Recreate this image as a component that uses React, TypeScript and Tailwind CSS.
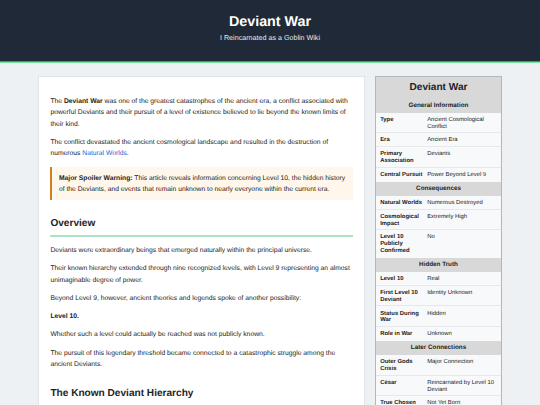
import type { ReactNode } from "react";

type Row = { label: string; value: string };
type Group = { title: string; rows: Row[] };

const GROUPS: Group[] = [
  {
    title: "General Information",
    rows: [
      { label: "Type", value: "Ancient Cosmological Conflict" },
      { label: "Era", value: "Ancient Era" },
      { label: "Primary Association", value: "Deviants" },
      { label: "Central Pursuit", value: "Power Beyond Level 9" },
    ],
  },
  {
    title: "Consequences",
    rows: [
      { label: "Natural Worlds", value: "Numerous Destroyed" },
      { label: "Cosmological Impact", value: "Extremely High" },
      { label: "Level 10 Publicly Confirmed", value: "No" },
    ],
  },
  {
    title: "Hidden Truth",
    rows: [
      { label: "Level 10", value: "Real" },
      { label: "First Level 10 Deviant", value: "Identity Unknown" },
      { label: "Status During War", value: "Hidden" },
      { label: "Role in War", value: "Unknown" },
    ],
  },
  {
    title: "Later Connections",
    rows: [
      { label: "Outer Gods Crisis", value: "Major Connection" },
      { label: "César", value: "Reincarnated by Level 10 Deviant" },
      { label: "True Chosen", value: "Not Yet Born" },
    ],
  },
];

function Heading({ children }: { children: ReactNode }) {
  return (
    <h2 className="mt-[15px] mb-[8.4px] border-b-2 border-[#afe2c4] pb-[2px] text-[10.1px] leading-[17.2px] font-bold text-[#1f2328]">
      {children}
    </h2>
  );
}

function P({ children }: { children: ReactNode }) {
  return <p className="my-[6.75px]">{children}</p>;
}

function Infobox() {
  return (
    <aside className="w-[127px] shrink-0 border border-[#b4b7ba] bg-[#f8f9fb] text-[5.9px] leading-[6.9px] text-[#222]">
      <div className="bg-[#d8d8d8] pt-[5.2px] pb-[5px] text-center text-[10.1px] leading-[11.5px] font-bold">
        Deviant War
      </div>
      {GROUPS.map((g) => (
        <section key={g.title}>
          <h3 className="bg-[#d8d8d8] pt-[4.3px] pb-[2.7px] text-center text-[6.3px] font-bold">{g.title}</h3>
          <dl className="divide-y divide-[#e6e8ea]">
            {g.rows.map((r) => (
              <div key={r.label} className="flex pt-[4.1px] pb-[1.9px] pl-[4.2px] last:pb-[2.7px]">
                <dt className="w-[47px] shrink-0 pr-[3px] font-bold">{r.label}</dt>
                <dd className="flex-1 pr-[4px]">{r.value}</dd>
              </div>
            ))}
          </dl>
        </section>
      ))}
    </aside>
  );
}

export default function App() {
  return (
    <div className="h-[405px] overflow-hidden bg-[#edf1f4] font-['Liberation_Sans',Arial,sans-serif] text-[6.75px] leading-[11.475px] text-[#222] [text-rendering:geometricPrecision]">
      <header className="h-[62px] border-b border-[#3f9a66] bg-[#1f2937] pt-[9.6px] text-center text-white shadow-[0_1px_0_#78e6a0]">
        <h1 className="text-[14.3px] leading-[24px] font-bold">Deviant War</h1>
        <p className="-mt-[0.6px] text-[7.15px] text-[#e8eaed]">I Reincarnated as a Goblin Wiki</p>
      </header>

      <div className="mx-auto mt-[14px] flex w-[464px] items-start justify-between">
        <main className="w-[327px] border border-[#e0e4e8] bg-white px-[11.4px] pt-[5px] pb-[12px]">
          <div className="pt-[7px]">
            <P>
              The <b>Deviant War</b> was one of the greatest catastrophes of the ancient era, a conflict associated with
              powerful Deviants and their pursuit of a level of existence believed to lie beyond the known limits of
              their kind.
            </P>
            <P>
              The conflict devastated the ancient cosmological landscape and resulted in the destruction of numerous{" "}
              <a href="#natural-worlds" className="text-[#2f5fd0]">Natural Worlds</a>.
            </P>
          </div>

          <div className="mt-[7.6px] border-l-2 border-[#d08020] bg-[#fff7eb] pt-[5.4px] pr-[6px] pb-[4.6px] pl-[6.5px]">
            <b>Major Spoiler Warning:</b> This article reveals information concerning Level 10, the hidden history of
            the Deviants, and events that remain unknown to nearly everyone within the current era.
          </div>

          <Heading>Overview</Heading>
          <P>Deviants were extraordinary beings that emerged naturally within the principal universe.</P>
          <P>
            Their known hierarchy extended through nine recognized levels, with Level 9 representing an almost
            unimaginable degree of power.
          </P>
          <P>Beyond Level 9, however, ancient theories and legends spoke of another possibility:</P>
          <P>
            <b>Level 10.</b>
          </P>
          <P>Whether such a level could actually be reached was not publicly known.</P>
          <P>
            The pursuit of this legendary threshold became connected to a catastrophic struggle among the ancient
            Deviants.
          </P>

          <Heading>The Known Deviant Hierarchy</Heading>
        </main>

        <Infobox />
      </div>
    </div>
  );
}
